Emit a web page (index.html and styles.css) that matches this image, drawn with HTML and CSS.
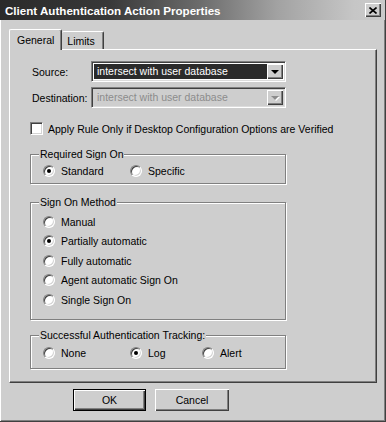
FILE: index.html
```html
<!DOCTYPE html>
<html lang="en">
<head>
    <meta charset="UTF-8">
    <title>Client Authentication Action Properties</title>
    <link rel="stylesheet" href="styles.css">
</head>
<body>

    <div class="window">
        <!-- Title bar -->
        <div class="titlebar">
            <span class="title">Client Authentication Action Properties</span>
            <span class="close-btn">
                <svg width="8" height="7" viewBox="0 0 8 7">
                    <path d="M0.5 0.5 L7.5 6.5 M7.5 0.5 L0.5 6.5" stroke="#000" stroke-width="1.6" fill="none"/>
                </svg>
            </span>
        </div>

        <!-- Tabs -->
        <div class="tabs">
            <span class="tab active">General</span>
            <span class="tab">Limits</span>
        </div>

        <div class="panel">
            <div class="field-row">
                <span class="field-label">Source:</span>
                <div class="select">
                    <span class="select-value selected">intersect with user database</span>
                    <span class="select-arrow"><span class="triangle"></span></span>
                </div>
            </div>
            <div class="field-row">
                <span class="field-label">Destination:</span>
                <div class="select disabled">
                    <span class="select-value">intersect with user database</span>
                    <span class="select-arrow"><span class="triangle"></span></span>
                </div>
            </div>

            <label class="check-row">
                <span class="checkbox"></span>
                Apply Rule Only if Desktop Configuration Options are Verified
            </label>

            <fieldset class="group group-required">
                <legend>Required Sign On</legend>
                <div class="radio-row">
                    <label class="radio-item col-a"><span class="radio checked"></span>Standard</label>
                    <label class="radio-item"><span class="radio"></span>Specific</label>
                </div>
            </fieldset>

            <fieldset class="group group-method">
                <legend>Sign On Method</legend>
                <label class="radio-item stacked"><span class="radio"></span>Manual</label>
                <label class="radio-item stacked"><span class="radio checked"></span>Partially automatic</label>
                <label class="radio-item stacked"><span class="radio"></span>Fully automatic</label>
                <label class="radio-item stacked"><span class="radio"></span>Agent automatic Sign On</label>
                <label class="radio-item stacked"><span class="radio"></span>Single Sign On</label>
            </fieldset>

            <fieldset class="group group-tracking">
                <legend>Successful Authentication Tracking:</legend>
                <div class="radio-row">
                    <label class="radio-item col-a"><span class="radio"></span>None</label>
                    <label class="radio-item col-b"><span class="radio checked"></span>Log</label>
                    <label class="radio-item"><span class="radio"></span>Alert</label>
                </div>
            </fieldset>
        </div>

        <div class="buttons">
            <button class="btn default">OK</button>
            <button class="btn">Cancel</button>
        </div>
    </div>

</body>
</html>
```

FILE: styles.css
```css
/* Base */
html, body {
    margin: 0;
    padding: 0;
    background-color: #cecece;
    font-family: "Liberation Sans", Arial, sans-serif;
    font-size: 10.5px;
    color: #000;
}

/* Dialog window */
.window {
    width: 386px;
    height: 422px;
    box-sizing: border-box;
    background-color: #cecece;
    border-right: 1px solid #404040;
    border-bottom: 1px solid #404040;
    box-shadow: inset 1px 0 0 #fff, inset -1px -1px 0 #808080;
    padding: 0 2px 0 2px;
}

/* Title bar */
.titlebar {
    height: 20px;
    margin: 0 -2px;
    padding: 0 4px 0 5px;
    display: flex;
    align-items: center;
    background: linear-gradient(to right, #2a2a2a 0%, #383838 28%, #6c6c6c 52%, #a2a2a2 72%, #c6c6c6 92%, #cacaca 100%);
}

.title {
    color: #fff;
    font-weight: bold;
    font-size: 11.6px;
}

.close-btn {
    margin-left: auto;
    width: 16px;
    height: 14px;
    box-sizing: border-box;
    background-color: #cecece;
    display: flex;
    align-items: center;
    justify-content: center;
    box-shadow: inset 1px 1px 0 #fff, inset -1px -1px 0 #404040, inset -2px -2px 0 #808080;
}

/* Tabs */
.tabs {
    display: flex;
    align-items: flex-end;
    margin-top: 9px;
    padding-left: 7px;
    height: 20px;
}

.tab {
    height: 18px;
    box-sizing: border-box;
    padding: 0 8px 0 5px;
    display: flex;
    align-items: center;
    border-top: 1px solid #fff;
    border-right: 1px solid #404040;
    border-radius: 2px 2px 0 0;
    box-shadow: inset -1px 0 0 #808080;
}

.tab.active {
    height: 21px;
    margin-bottom: -1px;
    padding: 0 7px;
    border-left: 1px solid #fff;
    background-color: #cecece;
    position: relative;
    z-index: 1;
}

/* Tab panel */
.panel {
    width: 368px;
    height: 334px;
    box-sizing: border-box;
    margin-left: 7px;
    border-top: 1px solid #fff;
    border-left: 1px solid #fff;
    border-right: 1px solid #404040;
    border-bottom: 1px solid #404040;
    box-shadow: inset -1px -1px 0 #808080;
    padding: 11px 0 0 20px;
}

.field-row {
    display: flex;
    align-items: center;
    height: 21px;
    margin-bottom: 5px;
    padding-left: 2px;
}

.field-label {
    width: 59px;
}

/* Combo box */
.select {
    width: 195px;
    height: 21px;
    box-sizing: border-box;
    display: flex;
    padding: 2px 2px 2px 2px;
    border: 1px solid;
    border-color: #808080 #fff #fff #808080;
    box-shadow: inset 1px 1px 0 #404040, inset -1px -1px 0 #dcdcdc;
    background-color: #fff;
}

.select-value {
    flex: 1;
    padding-left: 3px;
    line-height: 15px;
}

.select-value.selected {
    background-color: #2b2b2b;
    color: #fff;
}

.select-arrow {
    width: 16px;
    box-sizing: border-box;
    background-color: #cecece;
    display: flex;
    align-items: center;
    justify-content: center;
    box-shadow: inset 1px 1px 0 #fff, inset -1px -1px 0 #404040, inset -2px -2px 0 #808080;
}

.triangle {
    width: 0;
    height: 0;
    border-left: 4px solid transparent;
    border-right: 4px solid transparent;
    border-top: 4px solid #000;
    margin-left: -1px;
}

.select.disabled {
    background-color: #cecece;
    color: #8c8c8c;
}

.select.disabled .triangle {
    border-top-color: #8c8c8c;
    filter: drop-shadow(1px 1px 0 #fff);
}

/* Checkbox row */
.check-row {
    display: flex;
    align-items: center;
    gap: 5px;
    margin-top: 13px;
    height: 15px;
}

.checkbox {
    width: 13px;
    height: 13px;
    box-sizing: border-box;
    background-color: #fff;
    border: 1px solid;
    border-color: #808080 #fff #fff #808080;
    box-shadow: inset 1px 1px 0 #404040, inset -1px -1px 0 #d4d4d4;
}

/* Group boxes */
.group {
    width: 256px;
    box-sizing: border-box;
    margin: 0;
    padding: 0 0 0 12px;
    border: 1px solid #808080;
    box-shadow: 1px 1px 0 #fff, inset 1px 1px 0 #fff;
}

.group legend {
    padding: 0 1px;
    margin-left: -4px;
    line-height: 13px;
    background-color: #cecece;
}

.group-required {
    margin-top: 12px;
    padding-bottom: 3px;
}

.group-method {
    margin-top: 12px;
    padding-top: 3px;
    padding-bottom: 9px;
}

.group-tracking {
    margin-top: 9px;
    padding-top: 2px;
    padding-bottom: 5px;
}

.radio-row {
    display: flex;
    height: 19px;
    align-items: center;
}

.radio-item {
    display: flex;
    align-items: center;
    gap: 6px;
}

.radio-item.stacked {
    height: 19.5px;
}

.col-a {
    width: 87px;
}

.col-b {
    width: 72px;
}

.radio {
    width: 12px;
    height: 12px;
    box-sizing: border-box;
    border-radius: 50%;
    background-color: #fff;
    border: 1px solid;
    border-color: #808080 #fff #fff #808080;
    box-shadow: inset 1px 1px 0 #404040, inset -1px -1px 0 #d4d4d4;
    display: flex;
    align-items: center;
    justify-content: center;
}

.radio.checked::after {
    content: "";
    width: 4px;
    height: 4px;
    border-radius: 50%;
    background-color: #000;
}

/* Bottom buttons */
.buttons {
    display: flex;
    gap: 9px;
    margin-top: 6px;
    padding-left: 71px;
}

.btn {
    width: 74px;
    height: 22px;
    box-sizing: border-box;
    margin: 0;
    padding: 0;
    font-family: inherit;
    font-size: 10.5px;
    color: #000;
    background-color: #cecece;
    border: none;
    box-shadow: inset 1px 1px 0 #fff, inset -1px -1px 0 #404040, inset -2px -2px 0 #808080;
}

.btn.default {
    width: 73px;
    border: 1px solid #000;
}
```
